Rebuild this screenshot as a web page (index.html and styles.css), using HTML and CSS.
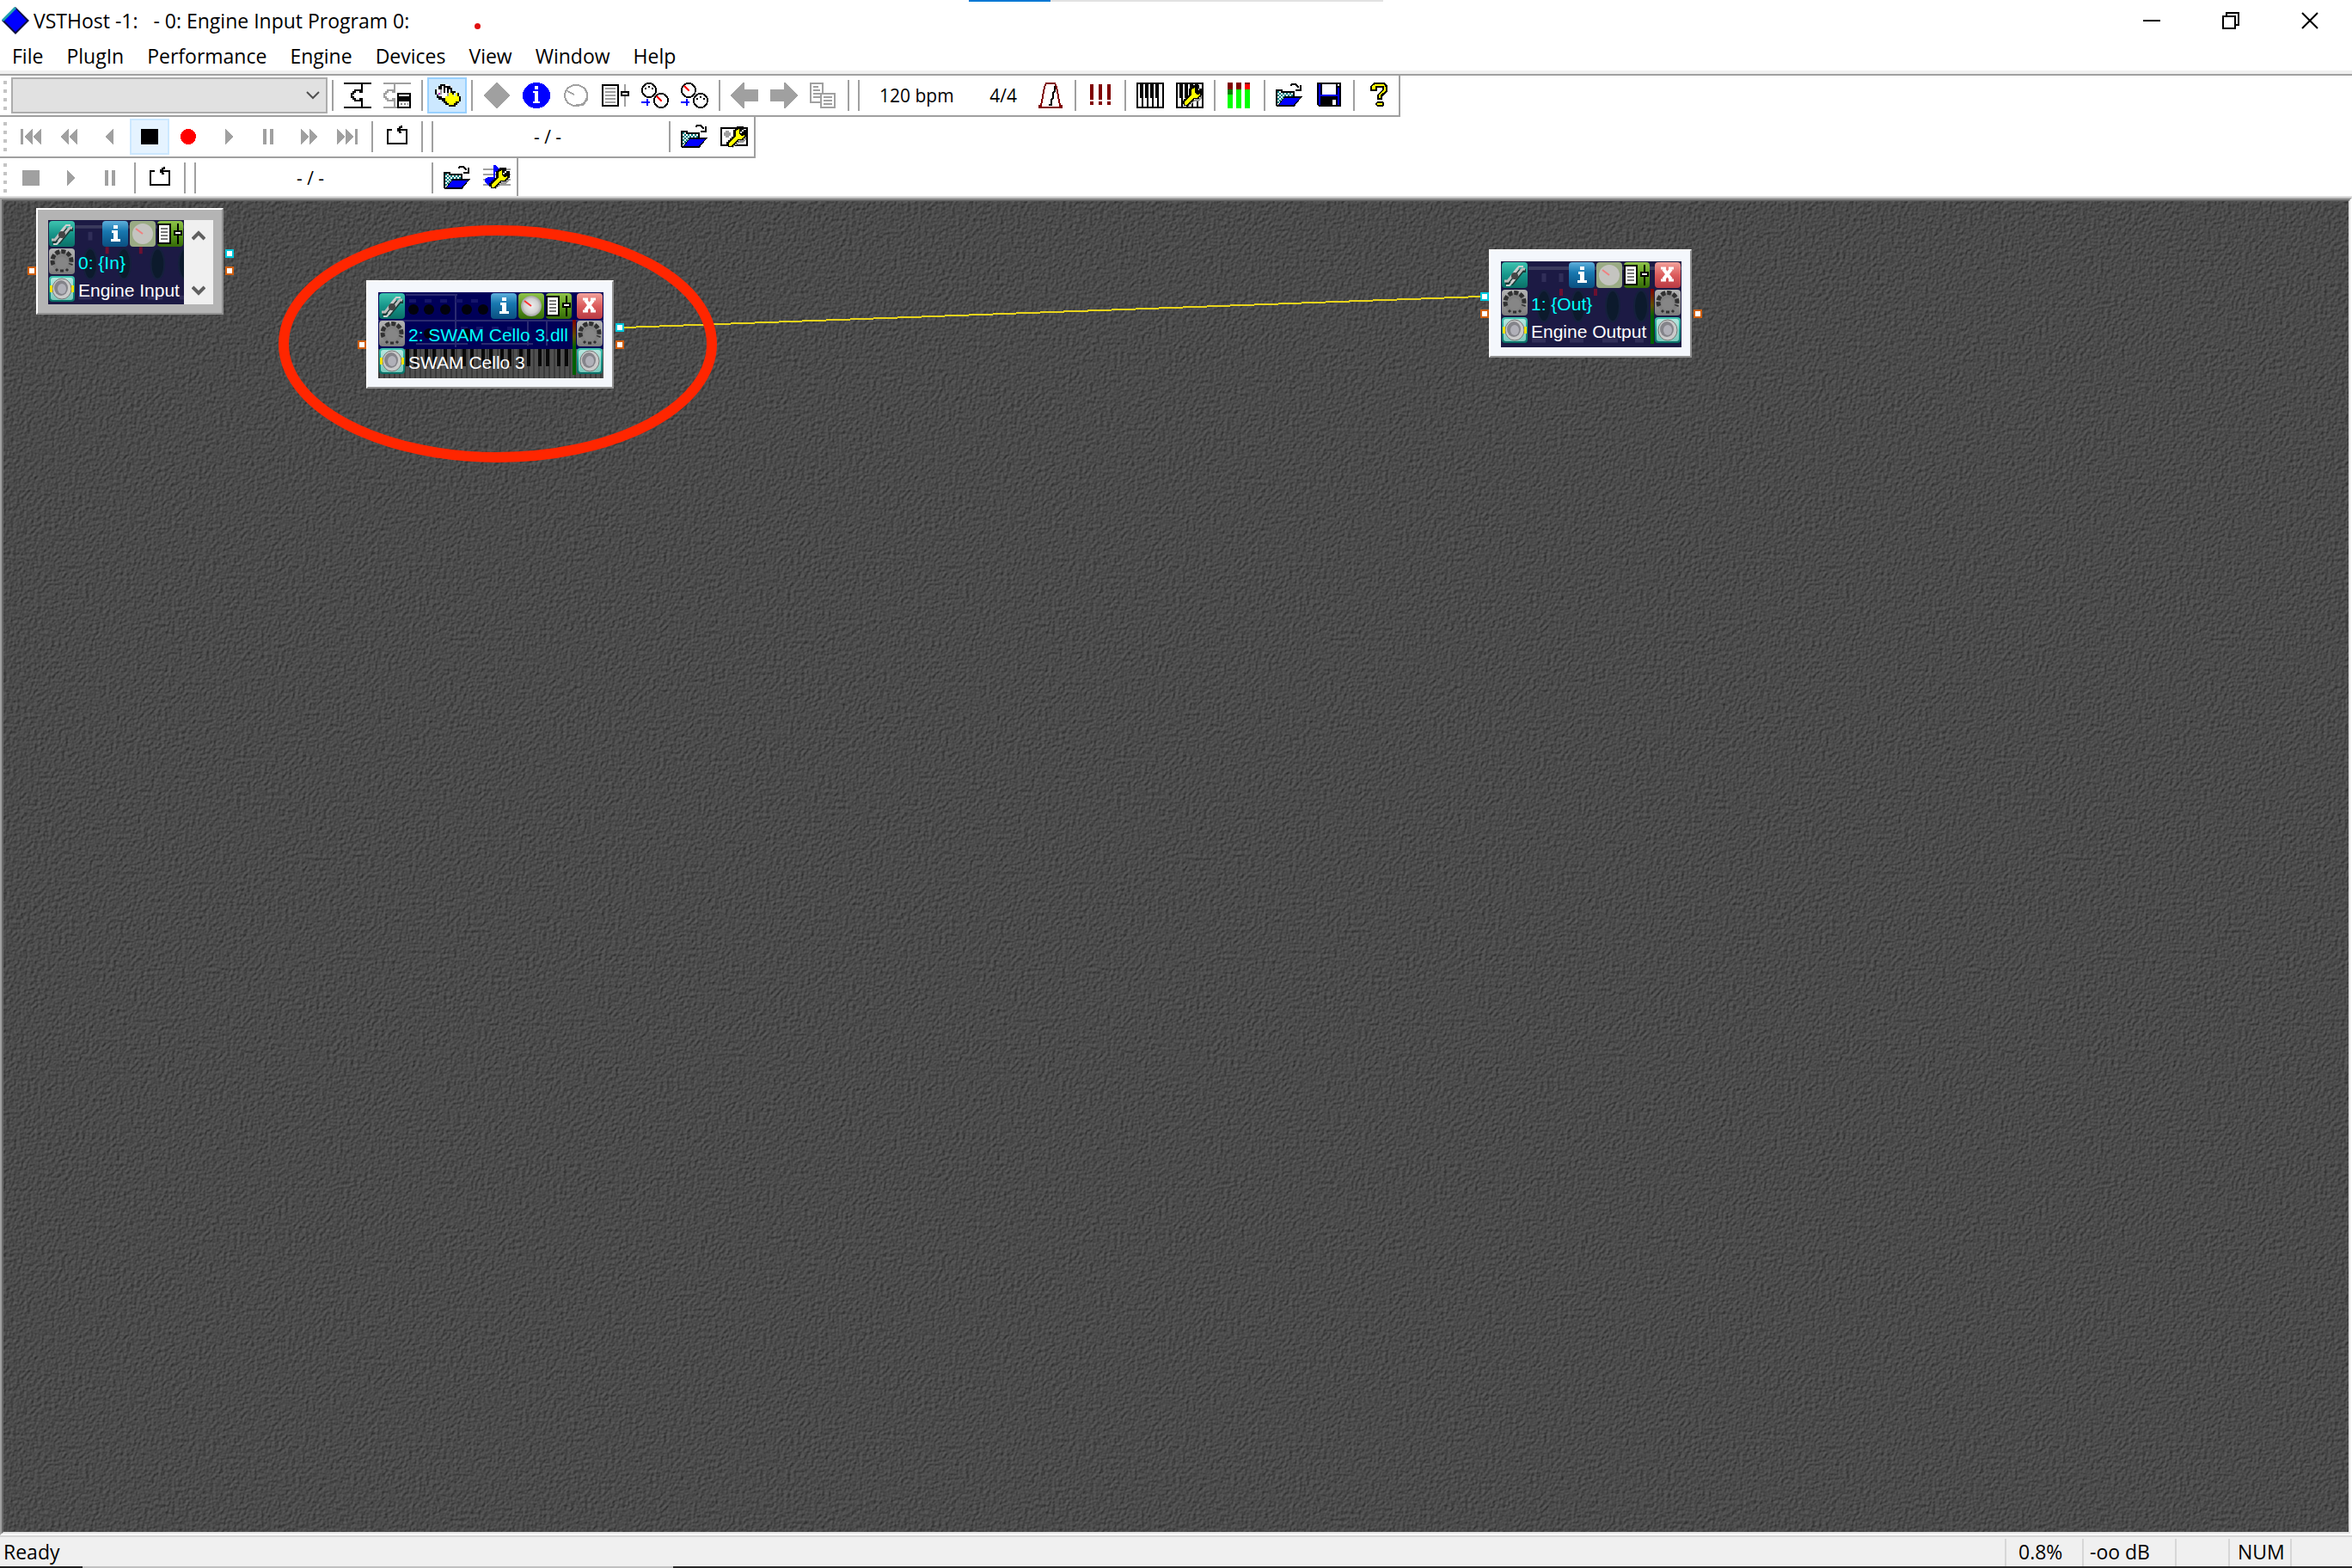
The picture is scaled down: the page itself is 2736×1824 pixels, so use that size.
FILE: index.html
```html
<!DOCTYPE html>
<html lang="en">
<head>
<meta charset="utf-8">
<title>VSTHost</title>
<link rel="stylesheet" href="styles.css">
</head>
<body>
<svg class="defs" aria-hidden="true">
  <defs>
    <linearGradient id="g-teal" x2="0" y2="1"><stop offset="0" stop-color="#3fc4b0"/><stop offset=".5" stop-color="#16958a"/><stop offset="1" stop-color="#0a6f66"/></linearGradient>
    <linearGradient id="g-blue" x2="0" y2="1"><stop offset="0" stop-color="#5fb0dc"/><stop offset=".4" stop-color="#1878b0"/><stop offset="1" stop-color="#0a4f80"/></linearGradient>
    <linearGradient id="g-green" x2="0" y2="1"><stop offset="0" stop-color="#8fc24a"/><stop offset=".5" stop-color="#5c9a1c"/><stop offset="1" stop-color="#356a08"/></linearGradient>
    <linearGradient id="g-red" x2="0" y2="1"><stop offset="0" stop-color="#f2a29c"/><stop offset=".5" stop-color="#dc5c5c"/><stop offset="1" stop-color="#b83a44"/></linearGradient>
    <linearGradient id="g-grey" x2="0" y2="1"><stop offset="0" stop-color="#b4b4b4"/><stop offset="1" stop-color="#7c7c7c"/></linearGradient>
    <linearGradient id="g-pale" x2="0" y2="1"><stop offset="0" stop-color="#b6e6de"/><stop offset="1" stop-color="#7cc8bc"/></linearGradient>
    <radialGradient id="g-knob"><stop offset="0" stop-color="#f0f0f0"/><stop offset=".7" stop-color="#d0d0d0"/><stop offset="1" stop-color="#a0a0a0"/></radialGradient>
    <pattern id="p-check" width="2" height="2" patternUnits="userSpaceOnUse"><rect width="2" height="2" fill="#fff"/><path d="M0 0h1v1H0zM1 1h1v1H1z" fill="#008080"/></pattern>
    <filter id="f-stone" x="0" y="0" width="100%" height="100%" color-interpolation-filters="sRGB">
      <feTurbulence type="fractalNoise" baseFrequency="0.25" numOctaves="2" seed="4"/>
      <feDiffuseLighting surfaceScale="1" diffuseConstant="1" lighting-color="#626262"><feDistantLight azimuth="225" elevation="50"/></feDiffuseLighting>
    </filter>
  </defs>
  <symbol id="i-puzzle" viewBox="0 0 16 15"><path d="M0 .5h16M0 14.5h16M10.5 1v4.500H9.500V4.500H6.500V5.500H5.500V6.500H4.500V8.500H5.500V9.500H6.500V10.500H9.500V9.500H10.500V14" fill="none" stroke="currentColor"/></symbol>
  <symbol id="i-puzzle-list" viewBox="0 0 16 15"><path d="M0 .5h16M0 14.500h8M6.500 1v4.500H5.500V4.500H2.500V5.500H1.500V6.500H.5V8.500H1.500V9.500H2.500V10.500H5.500V9.500H6.500V14" fill="none" stroke="#a0a0a0"/><path d="M8 6h8v9H8z"/><path d="M9 7h6v1H9zM9 11h6v3H9z" fill="#fff"/><path d="M10 12.500h1m1 0h1m1 0h.5" stroke="#888"/></symbol>
  <symbol id="i-plugs" viewBox="0 0 16 15"><path d="M2 3h2V1h5v1h2v3L8 9H4V7L2 6z" fill="#fff"/><path d="M3 2h1V1h3v1h3v1h1v3h-1V4H9v2H8V3H7v3H6V2H5v4H4V4H3zM1 4h1v3H1zM2 7h1v1h2v1h1v2H5v-1H3V9H2z"/><path d="M4 4h1v3H4zM8 6h1v2H8z" fill="#a0a0a0"/><path d="M3 6h1v1H3z" fill="#c000c0"/><path d="M7 8h2V6h2v1h1v1h1V6h1v1h1v4h-2v1h-1v1H9v-1H8v-1H7z" fill="#ff0"/><path d="M6 9h1v2h1v1h1v1h3v-1h1v-1h2v-1h1v1h-1v1h-1v1h-1v1H9v-1H7v-1H6zM11 5h2v1h-1v1h-1zM14 6h1v2h1v2h-1V8h-1z"/></symbol>
  <symbol id="i-diamond" viewBox="0 0 16 15"><path d="M8 0l8 7.500L8 15 0 7.500z" fill="#a0a0a0"/></symbol>
  <symbol id="i-info" viewBox="0 0 16 15"><ellipse cx="8" cy="7.500" rx="8" ry="7.500" fill="#00f"/><path d="M7 2h2v2H7zM6 5h3v6h1v1H6v-1h1V6H6z" fill="#fff"/></symbol>
  <symbol id="i-dial" viewBox="0 0 16 15"><ellipse cx="8" cy="7.500" rx="6.500" ry="6" fill="none" stroke="#a0a0a0"/><path d="M3 5l4 2M13 3l1.500 3v4L12 13H8" stroke="#a0a0a0" fill="none"/></symbol>
  <symbol id="i-params" viewBox="0 0 16 15"><path d="M.5 1.500h9v12h-9z" fill="#fff" stroke="#000"/><path d="M2 3.500h6M2 5.500h6M2 7.500h6M2 9.500h6M2 11.500h6M13.500 1v13" stroke="#a0a0a0"/><path d="M11.500 5.500h4v2h-4z" fill="#fff" stroke="#000"/></symbol>
  <symbol id="i-prog-a" viewBox="0 0 16 15"><circle cx="4.500" cy="4.500" r="4" fill="#fff" stroke="#000"/><circle cx="11.500" cy="10.500" r="4" fill="#fff" stroke="#000"/><path d="M2 3h1v1H2zM4 2h1v1H4zM6 3h1v1H6z"/><path d="M9 8l3 3" stroke="red"/><path d="M0 11.500h5M3.500 9.500v4" stroke="#00f"/></symbol>
  <symbol id="i-prog-b" viewBox="0 0 16 15"><circle cx="4.500" cy="4.500" r="4" fill="#fff" stroke="#000"/><circle cx="11.500" cy="10.500" r="4" fill="#fff" stroke="#000"/><path d="M9 9h1v1H9zM11 8h1v1h-1zM13 9h1v1h-1z"/><path d="M2 2l3 3" stroke="red"/><path d="M0 11.500h5M3.500 9.500v4" stroke="#00f"/></symbol>
  <symbol id="i-left" viewBox="0 0 16 15"><path d="M0 7.500L7 0h1v4h8v7H8v4H7z" fill="#a0a0a0"/></symbol>
  <symbol id="i-right" viewBox="0 0 16 15"><path d="M16 7.500L9 0H8v4H0v7h8v4h1z" fill="#a0a0a0"/></symbol>
  <symbol id="i-copy" viewBox="0 0 16 15"><g fill="#fff" stroke="#a0a0a0"><path d="M.5.500h7v11h-7zM2 2.500h3M2 4.500h4M2 6.500h4M2 8.500h4"/><path d="M6.500 6.500h8v8h-8zM8 8.500h5M8 10.500h5M8 12.500h5"/></g></symbol>
  <symbol id="i-metronome" viewBox="0 0 16 15"><path d="M5.500.500h5l1 2 2 11h1v1h-13v-1h1l2-11z" fill="#fff" stroke="#800000"/><path d="M10.500 2v3l-1 1v3l-1 1v3H7" stroke="#000" fill="none"/></symbol>
  <symbol id="i-panic" viewBox="0 0 16 15"><path d="M2 1h2v9H2zM7 1h2v9H7zM12 1h2v9h-2zM2 11h2v2H2zM7 11h2v2H7zM12 11h2v2h-2z" fill="#800000"/></symbol>
  <symbol id="i-keys" viewBox="0 0 16 15"><path d="M0 0h16v15H0z"/><path d="M1 1h1v8h1v5H1zM4 9V1h1v8h1v5H4zM7 1h1v8h1v5H7zM10 1h1v8h1v5h-2zM13 1h2v13h-2z" fill="#fff"/></symbol>
  <symbol id="i-wrench" viewBox="0 0 16 15"><path d="M7 13l5-4h2l1-2v2l-2 2h-2l-4 3z" fill="#999"/><path d="M4 11h1v-1h1V9h1V8h1V4h1V3h1V2h3v1h-1v1h-1v2h2V5h1V4h1v3h-1v1h-1v1h-3v1H9v1H8v1H7v1H5v-1H4z" stroke="#000"/><path d="M5 11l4-4V4l2-1v3l1 1h1l1-1v1l-2 2h-2l-4 4H5z" fill="#ff0"/></symbol>
  <symbol id="i-meters" viewBox="0 0 16 15"><path d="M1 0h3v4H1zM6 0h3v4H6z" fill="#800000"/><path d="M11 0h3v1h-3z" fill="#800000"/><path d="M11 1h3v3h-3z" fill="red"/><path d="M1 4h3v3H1z" fill="#008000"/><path d="M1 7h3v8H1zM6 4h3v11H6zM11 4h3v11h-3z" fill="#0f0"/></symbol>
  <symbol id="i-open" viewBox="0 0 16 15"><path d="M1 4h3v1h6v4H5l-4 4z" fill="url(#p-check)"/><path d="M.5 13.500v-9h3v1h7v3M.5 13.500h10l4-5h-9l-4 5" fill="none" stroke="#000"/><path d="M2 13l3-4h9l-4 4z" fill="#00f"/><path d="M8.500 2l1-1h2l2 2M14.500 1.500v3h-3" fill="none" stroke="#000"/></symbol>
  <symbol id="i-save" viewBox="0 0 16 15"><path d="M1 0h14v14H2L1 13z"/><path d="M2 1h1v12H2zM13 3h1v10h-1zM3 7h10v1H3z" fill="#00f"/><path d="M4 1h8v6H4zM10 10h2v3h-2zM13 1h1v1h-1z" fill="#fff"/></symbol>
  <symbol id="i-help" viewBox="0 0 16 15"><path d="M3 2l2-2h6l2 2v3l-3 3v2H7V7l3-3V3H7v2H3zM7 11h3l1 1v1l-1 1H7l-1-1v-1z"/><path d="M4 2l2-1h5l1 2v2L9 7v2H8V7l3-3V2H6v2H4zM7 12h3v1H7z" fill="#ff0"/></symbol>
  <symbol id="i-first" viewBox="0 0 16 15"><path d="M2 3h1.500v9H2zM9 3v9L4 7.500zM14 3v9L9 7.500z" fill="#a0a0a0"/></symbol>
  <symbol id="i-rewind" viewBox="0 0 16 15"><path d="M7 3v9L2 7.500zM12 3v9L7 7.500z" fill="#a0a0a0"/></symbol>
  <symbol id="i-back" viewBox="0 0 16 15"><path d="M10 3v9L5 7.500z" fill="#a0a0a0"/></symbol>
  <symbol id="i-stop" viewBox="0 0 16 15"><path d="M3 3h10v9H3z" fill="currentColor"/></symbol>
  <symbol id="i-record" viewBox="0 0 16 15"><circle cx="7.500" cy="7.500" r="4.500" fill="red"/></symbol>
  <symbol id="i-play" viewBox="0 0 16 15"><path d="M6 3v9l5-4.500z" fill="#a0a0a0"/></symbol>
  <symbol id="i-pause" viewBox="0 0 16 15"><path d="M5 3h2v9H5zM9 3h2v9H9z" fill="#a0a0a0"/></symbol>
  <symbol id="i-forward" viewBox="0 0 16 15"><path d="M4 3v9l5-4.500zM9 3v9l5-4.500z" fill="#a0a0a0"/></symbol>
  <symbol id="i-last" viewBox="0 0 16 15"><path d="M2 3v9l5-4.500zM7 3v9l5-4.500zM12.500 3H14v9h-1.500z" fill="#a0a0a0"/></symbol>
  <symbol id="i-loop" viewBox="0 0 16 15"><path d="M5 3.500H2.500v8h11v-8H8M10.500 1v1h-1v1h-1v1h1v1h1" fill="none" stroke="#000"/></symbol>
  <symbol id="i-card" viewBox="0 0 16 15"><path d="M.5 2.500h15v10H.5z" fill="#fff" stroke="#000"/><path d="M3 4h2v1h1v2H5v1H3V7H2V5h1z" fill="#a0a0a0"/></symbol>
  <symbol id="i-note" viewBox="0 0 16 15"><path d="M0 2.500h16M0 5.500h16M0 8.500h16M0 11.500h16" stroke="#a0a0a0"/><path d="M6 0h1l3 3v2L7 4v7l-2 1H3L1 10V8l2-1h3z" fill="#00f"/></symbol>

  <symbol id="n-link" viewBox="0 0 32 32"><rect x="1" y="1" width="30" height="30" rx="4" fill="url(#g-teal)"/><path d="M5 25h3l13-16M12 27l13-16h4" fill="none" stroke="#1c3c38" stroke-width="4"/><path d="M4 23h4L20 8M28 9h-3L12 25" fill="none" stroke="#bdbdbd" stroke-width="3"/><path d="M6 28h4l6-7M15 13l6-7h5" fill="none" stroke="#d0d0d0" stroke-width="2"/><circle cx="16" cy="17" r="4" fill="#444"/></symbol>
  <symbol id="n-midi" viewBox="0 0 32 32"><rect x="1" y="1" width="30" height="30" rx="4" fill="url(#g-grey)"/><circle cx="16" cy="16" r="12" fill="#808080"/><path d="M6 20a11 11 0 1 1 20 0" fill="none" stroke="#303030" stroke-width="5" stroke-dasharray="5 2"/><circle cx="16" cy="18" r="7" fill="#868686"/><path d="M9 25l2 2M23 25l-2 2M14 27h4" stroke="#303030" stroke-width="3"/></symbol>
  <symbol id="n-speaker" viewBox="0 0 32 32"><rect x="1" y="1" width="30" height="30" rx="4" fill="url(#g-teal)"/><rect x="3" y="3" width="26" height="26" rx="3" fill="url(#g-pale)"/><ellipse cx="16" cy="16" rx="11" ry="12" fill="#cacaca" stroke="#777"/><ellipse cx="15" cy="15" rx="8" ry="9" fill="#84848a"/><ellipse cx="16" cy="16" rx="5" ry="6" fill="#b0b0b8"/></symbol>
  <symbol id="n-info" viewBox="0 0 32 32"><rect x="1" y="1" width="30" height="30" rx="4" fill="url(#g-blue)"/><path d="M14 6h5v4h-5zM12 12h7v10h3v3H11v-3h3v-7h-2z" fill="#fff"/></symbol>
  <symbol id="n-dial" viewBox="0 0 32 32"><rect x="1" y="1" width="30" height="30" rx="4" fill="url(#g-green)"/><circle cx="16" cy="16" r="12" fill="url(#g-knob)"/><path d="M8 10l8 6" stroke="#ff3030" stroke-width="2"/></symbol>
  <symbol id="n-dial-dim" viewBox="0 0 32 32"><rect x="1" y="1" width="30" height="30" rx="4" fill="#9aab84"/><circle cx="16" cy="16" r="12" fill="#c4c4c0"/><path d="M8 10l8 6" stroke="#f08080" stroke-width="2"/></symbol>
  <symbol id="n-params" viewBox="0 0 32 32"><rect x="1" y="1" width="30" height="30" rx="4" fill="url(#g-green)"/><path d="M2 5h14v22H2z" fill="#fff" stroke="#000" stroke-width="2"/><path d="M5 10h8M5 14h8M5 18h8M5 22h8" stroke="#777" stroke-width="2"/><path d="M25 4v24" stroke="#000" stroke-width="2"/><path d="M21 13h8v4h-8z" fill="#fff" stroke="#000" stroke-width="2"/></symbol>
  <symbol id="n-close" viewBox="0 0 32 32"><rect x="1" y="1" width="30" height="30" rx="4" fill="url(#g-red)"/><path d="M11 9l9 12M20 9l-9 12" stroke="#fff" stroke-width="4"/><path d="M8 8h6M17 8h6M8 22h6M17 22h6" stroke="#fff" stroke-width="3"/></symbol>
  <symbol id="n-rack" viewBox="0 0 210 100" preserveAspectRatio="xMinYMin slice"><rect width="210" height="100" fill="#1c1a44"/><path d="M32 8h178" stroke="#3a3a5c" stroke-width="4"/><g fill="#0c1a2c" stroke="#15203c" stroke-width="2"><ellipse cx="50" cy="52" rx="8" ry="18"/><ellipse cx="90" cy="52" rx="8" ry="18"/><ellipse cx="130" cy="52" rx="8" ry="18"/><ellipse cx="163" cy="52" rx="8" ry="18"/></g><path d="M50 14v10M70 14v10M36 92h16M80 92h16M118 92h18M156 92h10" stroke="#302e58" stroke-width="5"/><path d="M70 32v8M110 32v8" stroke="#6c1030" stroke-width="4"/></symbol>
  <symbol id="n-synth" viewBox="0 0 262 100" preserveAspectRatio="xMinYMin slice"><rect width="262" height="66" fill="#000058"/><rect y="66" width="262" height="34" fill="#505050"/><path d="M32 3h60M90 2v62M0 33h262M174 34v28M196 34v28M44 60h60M120 60h60" stroke="#2a2a70" stroke-width="2" fill="none"/><path d="M36 10h90M96 42h60" stroke="#15156a" stroke-width="4" stroke-dasharray="8 10"/><g fill="#02020c"><circle cx="41" cy="20" r="6"/><circle cx="59" cy="20" r="6"/><circle cx="78" cy="20" r="6"/><circle cx="103" cy="20" r="6"/><circle cx="122" cy="20" r="6"/><circle cx="59" cy="48" r="6"/><circle cx="103" cy="48" r="6"/></g><path d="M0 83h262" stroke="#3a3a3a" stroke-width="34" stroke-dasharray="2 4"/><path d="M32 76h198" stroke="#080808" stroke-width="20" stroke-dasharray="4 5 4 9"/></symbol>
</svg>

<div class="app">
  <header class="titlebar">
    <div class="load-line"></div>
    <svg class="app-icon" viewBox="0 0 32 32"><path d="M16 0l16 16-16 16L0 16z" fill="#101040"/><path d="M16 2l13 14-13 13L3 16z" fill="#00f"/><path d="M1 16L16 1" stroke="#20a0b0" stroke-width="3"/></svg>
    <h1 class="title">VSTHost -1:&nbsp;&nbsp; - 0: Engine Input Program 0:</h1>
    <span class="rec-dot"></span>
    <div class="window-buttons">
      <button class="win-btn" aria-label="Minimize"><svg viewBox="0 0 20 20"><path d="M0 10h20" stroke="#000" stroke-width="2"/></svg></button>
      <button class="win-btn" aria-label="Restore"><svg viewBox="0 0 20 20"><path d="M1 5h14v14H1zM5 5V1h14v14h-4" fill="none" stroke="#000" stroke-width="2"/></svg></button>
      <button class="win-btn" aria-label="Close"><svg viewBox="0 0 20 20"><path d="M1 1l18 18M19 1L1 19" stroke="#000" stroke-width="2" shape-rendering="auto"/></svg></button>
    </div>
  </header>

  <nav class="menubar">
    <button>File</button><button>PlugIn</button><button>Performance</button><button>Engine</button><button>Devices</button><button>View</button><button>Window</button><button>Help</button>
  </nav>

  <div class="rebar">
    <div class="toolbar">
      <span class="grip"></span>
      <div class="combo"><select aria-label="Program" disabled><option></option></select><svg viewBox="0 0 16 10"><path d="M1 1l7 7 7-7" fill="none" stroke="#505050" stroke-width="2"/></svg></div>
      <span class="sep"></span>
      <button class="tool" aria-label="Plugins"><svg><use href="#i-puzzle"/></svg></button>
      <button class="tool" aria-label="Plugin list"><svg><use href="#i-puzzle-list"/></svg></button>
      <span class="sep"></span>
      <button class="tool is-on" aria-label="Chain"><svg><use href="#i-plugs"/></svg></button>
      <span class="sep"></span>
      <button class="tool" aria-label="Edit"><svg><use href="#i-diamond"/></svg></button>
      <button class="tool" aria-label="Info"><svg><use href="#i-info"/></svg></button>
      <button class="tool" aria-label="Dial"><svg><use href="#i-dial"/></svg></button>
      <button class="tool" aria-label="Parameters"><svg><use href="#i-params"/></svg></button>
      <button class="tool" aria-label="Load program"><svg><use href="#i-prog-a"/></svg></button>
      <button class="tool" aria-label="Save program"><svg><use href="#i-prog-b"/></svg></button>
      <span class="sep"></span>
      <button class="tool" aria-label="Previous"><svg><use href="#i-left"/></svg></button>
      <button class="tool" aria-label="Next"><svg><use href="#i-right"/></svg></button>
      <button class="tool" aria-label="Copy"><svg><use href="#i-copy"/></svg></button>
      <span class="sep"></span><span class="sep"></span>
      <div class="tempo"><span>120 bpm</span><span>4/4</span></div>
      <button class="tool" aria-label="Metronome"><svg><use href="#i-metronome"/></svg></button>
      <span class="sep"></span>
      <button class="tool" aria-label="Panic"><svg><use href="#i-panic"/></svg></button>
      <span class="sep"></span>
      <button class="tool" aria-label="Keyboard"><svg><use href="#i-keys"/></svg></button>
      <button class="tool" aria-label="Keyboard settings"><svg><use href="#i-keys"/><use href="#i-wrench"/></svg></button>
      <span class="sep"></span>
      <button class="tool" aria-label="Meters"><svg><use href="#i-meters"/></svg></button>
      <span class="sep"></span>
      <button class="tool" aria-label="Open"><svg><use href="#i-open"/></svg></button>
      <button class="tool" aria-label="Save"><svg><use href="#i-save"/></svg></button>
      <span class="sep"></span>
      <button class="tool" aria-label="Help"><svg><use href="#i-help"/></svg></button>
    </div>
    <div class="toolbar">
      <span class="grip"></span>
      <button class="tool" aria-label="First"><svg><use href="#i-first"/></svg></button>
      <button class="tool" aria-label="Rewind"><svg><use href="#i-rewind"/></svg></button>
      <button class="tool" aria-label="Back"><svg><use href="#i-back"/></svg></button>
      <button class="tool is-hot" aria-label="Stop"><svg><use href="#i-stop"/></svg></button>
      <button class="tool" aria-label="Record"><svg><use href="#i-record"/></svg></button>
      <button class="tool" aria-label="Play"><svg><use href="#i-play"/></svg></button>
      <button class="tool" aria-label="Pause"><svg><use href="#i-pause"/></svg></button>
      <button class="tool" aria-label="Forward"><svg><use href="#i-forward"/></svg></button>
      <button class="tool" aria-label="Last"><svg><use href="#i-last"/></svg></button>
      <span class="sep"></span>
      <button class="tool" aria-label="Loop"><svg><use href="#i-loop"/></svg></button>
      <span class="sep"></span><span class="sep"></span>
      <span class="position">- / -</span>
      <span class="sep"></span>
      <button class="tool" aria-label="Open recording"><svg><use href="#i-open"/></svg></button>
      <button class="tool" aria-label="Recorder settings"><svg><use href="#i-card"/><use href="#i-wrench"/></svg></button>
    </div>
    <div class="toolbar">
      <span class="grip"></span>
      <button class="tool is-off" aria-label="Stop MIDI"><svg><use href="#i-stop"/></svg></button>
      <button class="tool" aria-label="Play MIDI"><svg><use href="#i-play"/></svg></button>
      <button class="tool" aria-label="Pause MIDI"><svg><use href="#i-pause"/></svg></button>
      <span class="sep"></span>
      <button class="tool" aria-label="Loop MIDI"><svg><use href="#i-loop"/></svg></button>
      <span class="sep"></span><span class="sep"></span>
      <span class="position">- / -</span>
      <span class="sep"></span>
      <button class="tool" aria-label="Open MIDI"><svg><use href="#i-open"/></svg></button>
      <button class="tool" aria-label="MIDI settings"><svg><use href="#i-note"/><use href="#i-wrench"/></svg></button>
    </div>
  </div>

  <main class="workspace">
    <svg class="stone"><rect width="100%" height="100%" filter="url(#f-stone)"/></svg>
    <svg class="wires"><path d="M724 149L1720 113" stroke="#e8d41c" stroke-width="2" shape-rendering="crispEdges"/></svg>

    <section class="node node-in">
      <i class="port port-left audio"></i><i class="port port-right midi"></i><i class="port port-right audio"></i>
      <div class="panel">
        <svg class="skin"><use href="#n-rack"/></svg>
        <div class="row"><button aria-label="Link"><svg><use href="#n-link"/></svg></button><span class="space"></span><button aria-label="Info"><svg><use href="#n-info"/></svg></button><button aria-label="Dial"><svg><use href="#n-dial-dim"/></svg></button><button aria-label="Parameters"><svg><use href="#n-params"/></svg></button></div>
        <div class="row"><button aria-label="MIDI in"><svg><use href="#n-midi"/></svg></button><span class="slot">0: {In}</span></div>
        <div class="row"><button class="live" aria-label="Audio in"><svg><use href="#n-speaker"/></svg></button><span class="name">Engine Input</span></div>
      </div>
      <div class="scroller">
        <button aria-label="Scroll up"><svg viewBox="0 0 16 12"><path d="M1 10l7-7 7 7" fill="none" stroke="#606060" stroke-width="4"/></svg></button>
        <button aria-label="Scroll down"><svg viewBox="0 0 16 12"><path d="M1 2l7 7 7-7" fill="none" stroke="#606060" stroke-width="4"/></svg></button>
      </div>
    </section>

    <section class="node node-cello">
      <i class="port port-left audio"></i><i class="port port-right midi"></i><i class="port port-right audio"></i>
      <div class="panel">
        <svg class="skin"><use href="#n-synth"/></svg>
        <div class="row"><button aria-label="Link"><svg><use href="#n-link"/></svg></button><span class="space"></span><button aria-label="Info"><svg><use href="#n-info"/></svg></button><button aria-label="Dial"><svg><use href="#n-dial"/></svg></button><button aria-label="Parameters"><svg><use href="#n-params"/></svg></button><button class="last" aria-label="Unload"><svg><use href="#n-close"/></svg></button></div>
        <div class="row"><button aria-label="MIDI in"><svg><use href="#n-midi"/></svg></button><span class="slot">2: SWAM Cello 3.dll</span><i class="level level-top"></i><button aria-label="MIDI out"><svg><use href="#n-midi"/></svg></button></div>
        <div class="row"><button class="live" aria-label="Audio in"><svg><use href="#n-speaker"/></svg></button><span class="name">SWAM Cello 3</span><i class="level"></i><button aria-label="Audio out"><svg><use href="#n-speaker"/></svg></button></div>
      </div>
    </section>

    <section class="node node-out">
      <i class="port port-left midi"></i><i class="port port-left audio"></i><i class="port port-right audio"></i>
      <div class="panel">
        <svg class="skin"><use href="#n-rack"/></svg>
        <div class="row"><button aria-label="Link"><svg><use href="#n-link"/></svg></button><span class="space"></span><button aria-label="Info"><svg><use href="#n-info"/></svg></button><button aria-label="Dial"><svg><use href="#n-dial-dim"/></svg></button><button aria-label="Parameters"><svg><use href="#n-params"/></svg></button><button class="last" aria-label="Unload"><svg><use href="#n-close"/></svg></button></div>
        <div class="row"><button aria-label="MIDI in"><svg><use href="#n-midi"/></svg></button><span class="slot">1: {Out}</span><i class="level level-top"></i><button aria-label="MIDI out"><svg><use href="#n-midi"/></svg></button></div>
        <div class="row"><button class="live" aria-label="Audio in"><svg><use href="#n-speaker"/></svg></button><span class="name">Engine Output</span><i class="level"></i><button aria-label="Audio out"><svg><use href="#n-speaker"/></svg></button></div>
      </div>
    </section>

    <svg class="wires"><ellipse cx="577" cy="168" rx="249" ry="132" fill="none" stroke="#ff2600" stroke-width="12"/></svg>
  </main>

  <footer class="statusbar">
    <span class="status-text">Ready</span>
    <span class="cell cell-cpu">0.8%</span>
    <span class="cell cell-level">-oo dB</span>
    <span class="cell cell-caps"></span>
    <span class="cell cell-num">NUM</span>
    <span class="cell cell-scroll"></span>
  </footer>
  <div class="taskline"></div>
</div>
</body>
</html>
```
FILE: styles.css
```css
* { box-sizing: border-box; }

body {
  margin: 0;
  background: #fff;
  color: #000;
  font-family: "Open Sans", "Noto Sans", sans-serif;
  font-size: 23px;
  line-height: 30px;
}

button {
  margin: 0;
  padding: 0;
  border: 0;
  background: none;
  color: inherit;
  font: inherit;
}

svg { display: block; }
.defs { position: absolute; width: 0; height: 0; }

.app {
  display: flex;
  flex-direction: column;
  min-height: 100vh;
}

/* Title bar */
.titlebar {
  position: relative;
  display: flex;
  align-items: center;
  height: 48px;
  padding: 0 3px 0 2px;
}
.load-line {
  position: absolute;
  top: 0;
  left: 41.2%;
  width: 482px;
  height: 2px;
  background: linear-gradient(90deg, #0078d4 95px, #e2e2e2 95px);
}
.app-icon { width: 32px; height: 32px; }
.title {
  margin: 0 0 0 5px;
  font-size: 23px;
  font-weight: 400;
}
.rec-dot {
  width: 7px;
  height: 7px;
  margin: 12px 0 0 76px;
  border-radius: 50%;
  background: #e01010;
}
.window-buttons { display: flex; margin-left: auto; }
.win-btn {
  display: grid;
  place-items: center;
  width: 92px;
  height: 44px;
}
.win-btn svg { width: 20px; height: 20px; shape-rendering: crispEdges; }

/* Menu bar */
.menubar {
  display: flex;
  height: 38px;
  padding-left: 1px;
  border-bottom: 4px solid #f0f0f0;
}
.menubar button { padding: 0 14px 0 13px; }

/* Toolbars */
.rebar {
  border-top: 2px solid #a0a0a0;
  border-bottom: 2px solid #dcdcdc;
}
.toolbar {
  display: flex;
  align-items: center;
  width: max-content;
  height: 48px;
  padding: 2px 0;
  border-right: 2px solid #a0a0a0;
  border-bottom: 2px solid #a0a0a0;
}
.toolbar:last-child { height: 44px; padding-bottom: 0; border-bottom: 0; }
.grip {
  width: 4px;
  height: 34px;
  margin: 0 5px 0 4px;
  background: repeating-linear-gradient(#c4c4c4 0 4px, transparent 4px 10px);
}
.combo { display: grid; width: 368px; height: 42px; }
.combo select {
  grid-area: 1 / 1;
  width: 100%;
  border: 2px solid #adadad;
  border-radius: 0;
  background: #e1e1e1;
  opacity: 1;
  appearance: none;
}
.combo svg {
  grid-area: 1 / 1;
  place-self: center end;
  width: 16px;
  height: 10px;
  margin-right: 9px;
}
.sep {
  width: 2px;
  height: 36px;
  margin: 0 5px;
  background: #a0a0a0;
}
.tool {
  display: grid;
  place-items: center;
  width: 46px;
  height: 42px;
}
.tool svg { width: 32px; height: 30px; shape-rendering: crispEdges; }
.is-on { border: 2px solid #99d1ff; background: #cce8ff; }
.is-hot { border: 2px solid #cce8ff; background: #e5f3ff; }
.is-off { color: #a0a0a0; }
.tempo {
  display: flex;
  justify-content: space-between;
  width: 194px;
  padding: 0 16px 0 18px;
  font-size: 21px;
}
.position {
  width: 264px;
  padding-right: 8px;
  font-size: 21px;
  text-align: center;
}

/* Plug-in canvas */
.workspace {
  position: relative;
  flex: 1;
  border: 2px solid #a0a0a0;
  border-right-color: #fff;
  border-bottom-color: #fff;
  background: #4a4a4a;
}
.workspace::after {
  content: "";
  position: absolute;
  inset: 0;
  border: 2px solid #696969;
  border-right-color: #e3e3e3;
  border-bottom-color: #e3e3e3;
  pointer-events: none;
}
.stone, .wires {
  position: absolute;
  inset: 0;
  width: 100%;
  height: 100%;
}

.node {
  position: absolute;
  display: flex;
  padding: 12px;
  border: 2px solid;
  border-color: #fff #909090 #909090 #fff;
  background: #f4f7fc;
  font-family: "Liberation Sans", sans-serif;
  font-size: 21px;
  line-height: 32px;
}
.node-in { left: 40px; top: 10px; padding-bottom: 10px; padding-right: 10px; background: #b4b4b4; }
.node-cello { left: 424px; top: 94px; padding-right: 10px; padding-bottom: 10px; }
.node-out { left: 1730px; top: 58px; padding-right: 10px; padding-bottom: 10px; }

.panel { position: relative; overflow: hidden; }
.node-in .panel { width: 158px; height: 98px; }
.node-cello .panel { width: 262px; height: 100px; }
.node-out .panel { width: 210px; height: 100px; }
.skin { position: absolute; inset: 0; width: 100%; height: 100%; }
.row { position: relative; display: flex; height: 32px; white-space: nowrap; }
.row svg { width: 32px; height: 32px; }
.space, .slot, .name { flex: 1; }
.slot, .name { padding: 2px 0 0 3px; }
.slot { color: #0ff; }
.name { color: #fff; }
.last { margin-left: 4px; }
.level { width: 4px; background: #006000; }
.level-top { background: linear-gradient(#800000, #605000 60%, #006000); }
.live { position: relative; }
.live::before, .live::after {
  content: "";
  position: absolute;
  top: 12px;
  width: 3px;
  height: 8px;
  background: #f0e000;
}
.live::before { left: 2px; }
.live::after { right: 2px; }

.scroller {
  display: flex;
  flex-direction: column;
  justify-content: space-between;
  align-items: center;
  width: 34px;
  padding: 12px 0 10px;
  background: #f0f0f0;
}
.scroller svg { width: 16px; height: 12px; }

.port {
  position: absolute;
  width: 10px;
  height: 10px;
  border: 2px solid #d06010;
  background: #fff;
}
.port.midi { top: 48px; border-color: #00c8dc; }
.port.audio { top: 68px; }
.node-in .port.midi { top: 46px; }
.node-in .port.audio { top: 66px; }
.port-left { left: -12px; }
.port-right { right: -14px; }

/* Status bar */
.statusbar {
  display: flex;
  height: 36px;
  border-top: 2px solid #d7d7d7;
  background: #f0f0f0;
}
.status-text { flex: 1; padding-left: 4px; line-height: 34px; }
.cell {
  margin-top: 2px;
  border-left: 2px solid #d7d7d7;
}
.cell-cpu { width: 90px; padding-left: 14px; }
.cell-level { width: 108px; padding-left: 7px; }
.cell-caps { width: 62px; }
.cell-num { width: 72px; padding-left: 9px; }
.cell-scroll { width: 72px; }
.taskline {
  height: 2px;
  background: linear-gradient(90deg, #202020 96px, #c0c0c0 96px, #c0c0c0 783px, #282828 783px);
}
```
